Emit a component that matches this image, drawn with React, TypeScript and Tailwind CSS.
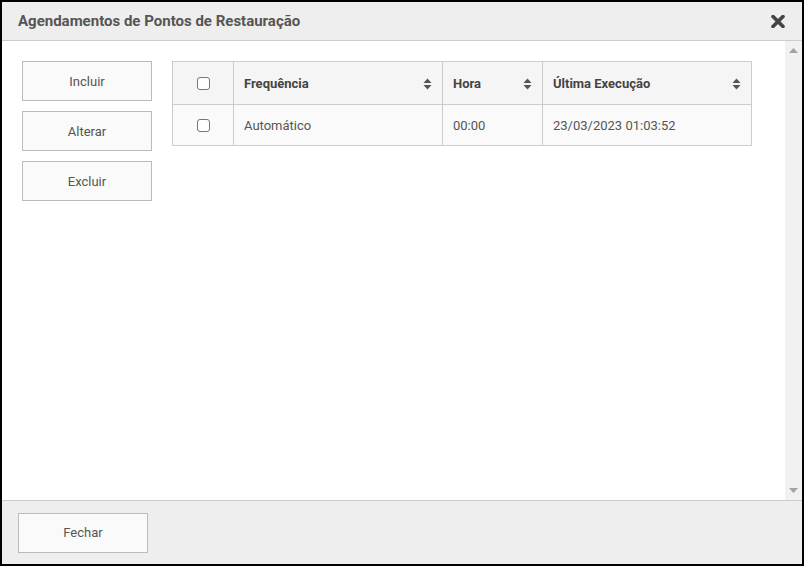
import React, { useState } from 'react';

type Agendamento = {
    id: number;
    frequencia: string;
    hora: string;
    ultimaExecucao: string;
};

const agendamentos: Agendamento[] = [
    { id: 1, frequencia: 'Automático', hora: '00:00', ultimaExecucao: '23/03/2023 01:03:52' },
];

const SortIcon: React.FC = () => (
    <svg width="9" height="12" viewBox="0 0 9 12" className="shrink-0">
        <path d="M4.5 0.5 L8.5 5 H0.5 Z" fill="#555" />
        <path d="M4.5 11.5 L8.5 7 H0.5 Z" fill="#555" />
    </svg>
);

const Checkbox: React.FC<{ checked: boolean; onChange: () => void }> = ({ checked, onChange }) => (
    <button
        type="button"
        onClick={onChange}
        className="w-[13px] h-[13px] rounded-[3px] border border-[#767676] bg-white flex items-center justify-center"
    >
        {checked && <span className="w-[7px] h-[7px] bg-[#555] rounded-[1px]" />}
    </button>
);

const ActionButton: React.FC<{ label: string }> = ({ label }) => (
    <button
        type="button"
        className="w-[130px] h-[40px] pt-px border border-[#bbbbbb] bg-[#fafafa] text-[13px] text-[#555] hover:bg-[#f0f0f0]"
    >
        {label}
    </button>
);

const App: React.FC = () => {
    const [selected, setSelected] = useState<number[]>([]);

    const toggleAll = () => {
        setSelected(prev => (prev.length === agendamentos.length ? [] : agendamentos.map(a => a.id)));
    };

    const toggle = (id: number) => {
        setSelected(prev => (prev.includes(id) ? prev.filter(x => x !== id) : [...prev, id]));
    };

    return (
        <div
            className="w-[804px] h-[566px] border-2 border-black bg-white flex flex-col overflow-hidden"
            style={{ fontFamily: 'Roboto, "Liberation Sans", sans-serif' }}
        >
            {/* cabeçalho */}
            <div className="h-[39px] shrink-0 bg-[#eeeeee] border-b border-[#cccccc] flex items-center justify-between pl-4 pr-4">
                <h2 className="text-[15px] font-bold text-[#555]">Agendamentos de Pontos de Restauração</h2>
                <button type="button" className="w-[16px] h-[16px] flex items-center justify-center" aria-label="Fechar">
                    <svg width="14" height="13" viewBox="0 0 14 13">
                        <path d="M2 1.5 L12 11.5 M12 1.5 L2 11.5" stroke="#444" strokeWidth="3.6" strokeLinecap="round" />
                    </svg>
                </button>
            </div>

            {/* corpo */}
            <div className="flex-1 flex min-h-0">
                <div className="flex-1 flex gap-5 pl-5 pt-5">
                    <div className="flex flex-col gap-[10px]">
                        <ActionButton label="Incluir" />
                        <ActionButton label="Alterar" />
                        <ActionButton label="Excluir" />
                    </div>

                    <table className="w-[580px] h-fit border-collapse border border-[#cccccc] text-[13px] self-start">
                        <thead>
                            <tr className="h-[43px] bg-[#f5f5f5]">
                                <th className="w-[61px] border border-[#cccccc]">
                                    <div className="flex justify-center">
                                        <Checkbox checked={selected.length === agendamentos.length} onChange={toggleAll} />
                                    </div>
                                </th>
                                <th className="w-[209px] border border-[#cccccc] px-[10px] pt-px text-left font-bold text-[#444]">
                                    <div className="flex items-center justify-between">Frequência <SortIcon /></div>
                                </th>
                                <th className="w-[100px] border border-[#cccccc] px-[10px] pt-px text-left font-bold text-[#444]">
                                    <div className="flex items-center justify-between">Hora <SortIcon /></div>
                                </th>
                                <th className="border border-[#cccccc] px-[10px] pt-px text-left font-bold text-[#444]">
                                    <div className="flex items-center justify-between">Última Execução <SortIcon /></div>
                                </th>
                            </tr>
                        </thead>
                        <tbody>
                            {agendamentos.map(a => (
                                <tr key={a.id} className="h-[41px] bg-[#fafafa] text-[#555]">
                                    <td className="border border-[#cccccc]">
                                        <div className="flex justify-center">
                                            <Checkbox checked={selected.includes(a.id)} onChange={() => toggle(a.id)} />
                                        </div>
                                    </td>
                                    <td className="border border-[#cccccc] px-[10px] pt-px">{a.frequencia}</td>
                                    <td className="border border-[#cccccc] px-[10px] pt-px">{a.hora}</td>
                                    <td className="border border-[#cccccc] px-[10px] pt-px">{a.ultimaExecucao}</td>
                                </tr>
                            ))}
                        </tbody>
                    </table>
                </div>

                {/* barra de rolagem */}
                <div className="w-[17px] shrink-0 bg-[#f1f1f1] flex flex-col justify-between items-center py-[7px]">
                    <svg width="9" height="5" viewBox="0 0 9 5">
                        <path d="M4.5 0 L9 5 H0 Z" fill="#a3a3a3" />
                    </svg>
                    <svg width="9" height="5" viewBox="0 0 9 5">
                        <path d="M0 0 H9 L4.5 5 Z" fill="#a3a3a3" />
                    </svg>
                </div>
            </div>

            {/* rodapé */}
            <div className="h-[64px] shrink-0 bg-[#eeeeee] border-t border-[#cccccc] flex items-center pl-4">
                <button
                    type="button"
                    className="w-[130px] h-[40px] border border-[#bbbbbb] bg-[#fafafa] text-[13px] text-[#555]"
                >
                    Fechar
                </button>
            </div>
        </div>
    );
};

export default App;
